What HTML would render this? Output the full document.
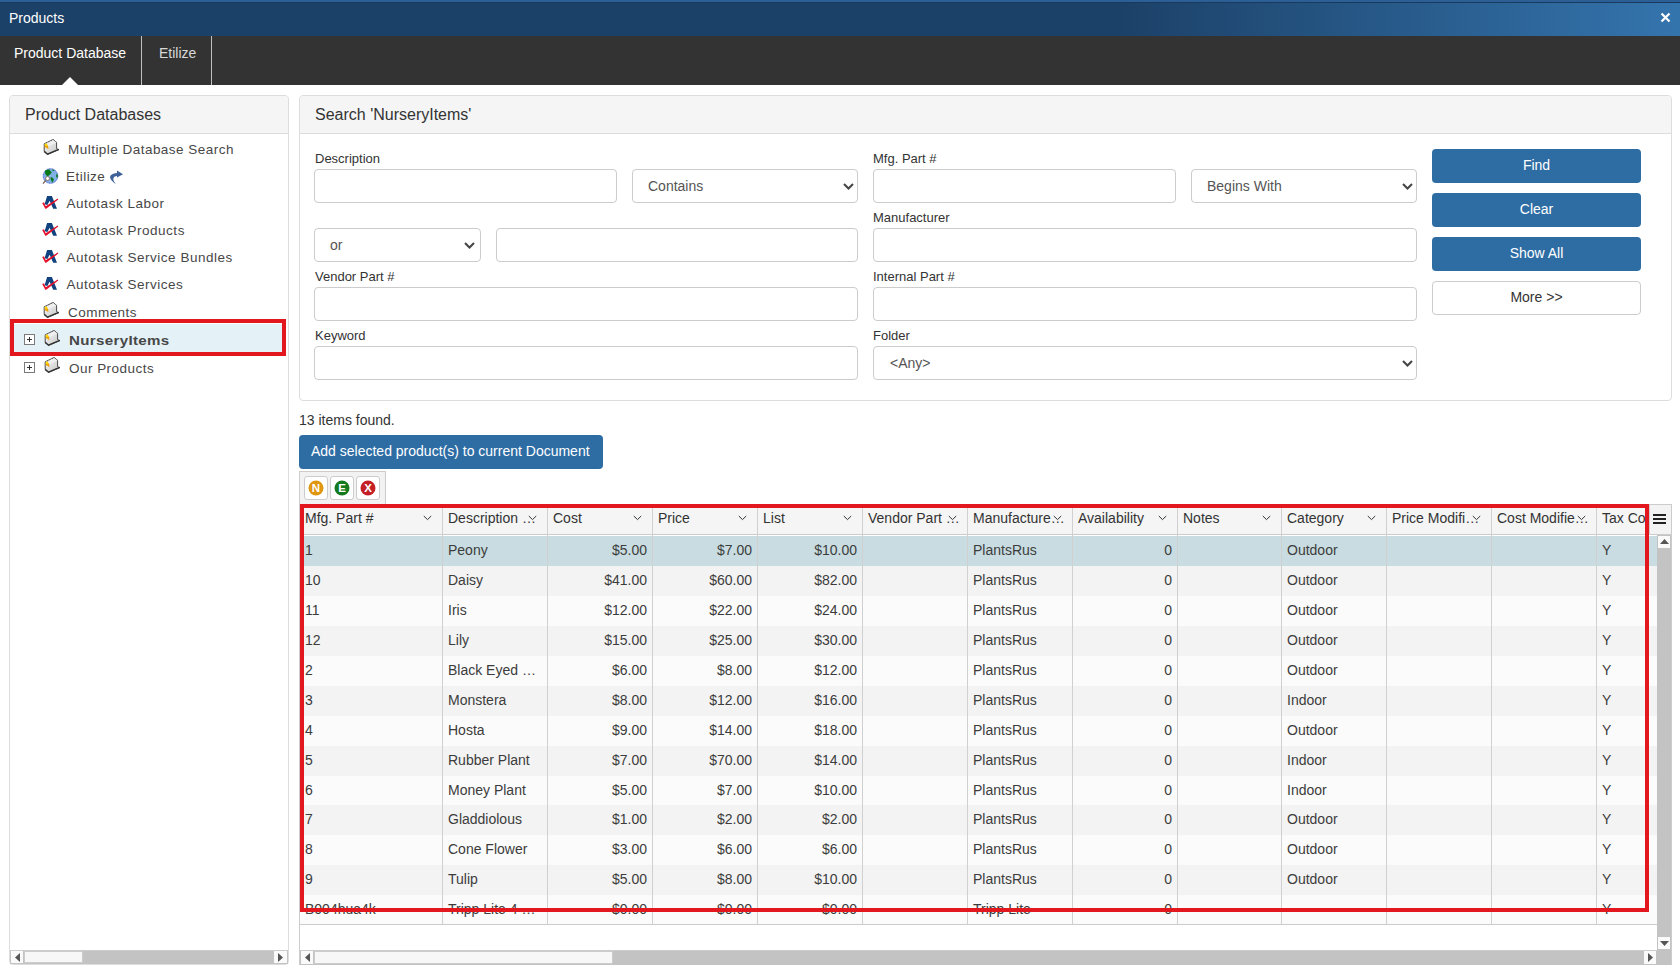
<!DOCTYPE html>
<html><head><meta charset="utf-8">
<style>
*{box-sizing:border-box;margin:0;padding:0}
html,body{width:1680px;height:965px;overflow:hidden;background:#fff;font-family:"Liberation Sans",sans-serif;color:#333;font-size:14px}
.abs{position:absolute}
#title{left:0;top:0;width:1680px;height:36px;background:linear-gradient(to right,#1c4168 0,#1c4168 1120px,#3474ad 1680px);}
#title .strip{left:0;top:0;width:1680px;height:2px;background:#2b5f95}
#title .line{left:0;top:2px;width:1680px;height:1px;background:#173a5e}
#title .t{left:9px;top:10px;color:#fff;font-size:14px;line-height:16px}
#tabs{left:0;top:36px;width:1680px;height:49px;background:#333}
.tab{top:0;height:49px;color:#fff;font-size:14px;line-height:16px;padding-top:9px}
.sep{top:0;width:1px;height:49px;background:#c0c0c0}
.panel{border:1px solid #ddd;border-radius:4px;background:#fff}
.phead{left:0;top:0;right:0;height:38px;background:#f5f5f5;border-bottom:1px solid #ddd;border-radius:3px 3px 0 0}
.ptitle{font-size:16px;line-height:18px;color:#333}
.lbl{font-size:13px;line-height:15px;color:#333}
.inp{border:1px solid #ccc;border-radius:4px;background:#fff;height:34px}
.sel{border:1px solid #ccc;border-radius:4px;background:#fff;height:34px;font-size:14px;color:#555;line-height:16px;padding-top:8px}
.tr{font-size:13.5px;line-height:15px;color:#474747;letter-spacing:0.47px;white-space:nowrap}
.gh{font-size:14px;line-height:16px;color:#333;white-space:nowrap}
.gc{font-size:14px;line-height:16px;color:#3c3c3c;white-space:nowrap}
.btn{border-radius:4px;background:#2e6da4;color:#fff;font-size:14px;text-align:center;line-height:16px;padding-top:8px;height:34px}
</style></head><body>
<div id="title" class="abs"><div class="abs strip"></div><div class="abs line"></div><div class="abs t">Products</div>
<svg class="abs" style="left:1660px;top:12px" width="11" height="11" viewBox="0 0 11 11"><path d="M1.5 1.5 L9.5 9.5 M9.5 1.5 L1.5 9.5" stroke="#fff" stroke-width="2.2"/></svg>
</div>
<div id="tabs" class="abs">
 <div class="abs tab" style="left:14px">Product Database</div>
 <div class="abs sep" style="left:141px"></div>
 <div class="abs tab" style="left:159px;color:#d8d8d8">Etilize</div>
 <div class="abs sep" style="left:211px"></div>
 <svg class="abs" style="left:62px;top:41px" width="16" height="8" viewBox="0 0 16 8"><path d="M0 8 L8 0 L16 8 Z" fill="#fff"/></svg>
</div>

<!-- left panel -->
<div class="abs panel" style="left:9px;top:95px;width:280px;height:870px">
 <div class="abs phead"></div>
 <div class="abs ptitle" style="left:15px;top:10px">Product Databases</div>
</div>

<!-- right panel -->
<div class="abs panel" style="left:299px;top:95px;width:1373px;height:306px">
 <div class="abs phead"></div>
 <div class="abs ptitle" style="left:15px;top:10px">Search 'NurseryItems'</div>
</div>


<!-- tree -->
<div class="abs" style="left:14px;top:324px;width:268px;height:28px;background:#e4f1f7"></div>
<svg class="abs" style="left:43px;top:139px" width="17" height="17" viewBox="0 0 17 17"><defs><linearGradient id="g43_139" x1="0" y1="0" x2="1" y2="1"><stop offset="0" stop-color="#fbfbfb"/><stop offset="1" stop-color="#c2c2c2"/></linearGradient></defs><path d="M1.2 4.9 L10.2 0.5 L13.6 3.4 L13.6 9.6 L15.8 10.6 L4.5 15.4 L1.2 12.4 Z" fill="url(#g43_139)" stroke="#4a4a4a" stroke-width="1" stroke-linejoin="round"/><path d="M1.2 4.9 L10.2 0.5 L13.6 3.4 L4.6 7.6 Z" fill="#efefef"/><path d="M1.2 12.4 L4.5 15.2 L15.8 10.4" stroke="#333" stroke-width="1.5" fill="none"/><path d="M1.2 4.9 L10.2 0.5 L13.6 3.4" stroke="#555" stroke-width="1" fill="none" stroke-dasharray="1.3 0.6"/><path d="M1.8 4.9 L3.4 4.5 L5.2 7.2 L5.4 10.2 L4.4 9.6 L3 8.4 L1.8 8.4 Z" fill="#f2a200"/><path d="M1.8 4.9 L3.4 4.5 L4.6 6.6 L3.2 7 L1.8 6.8 Z" fill="#ffe000"/></svg><div class="abs tr" style="left:68px;top:142px">Multiple Database Search</div>
<svg class="abs" style="left:42px;top:168px" width="17" height="17" viewBox="0 0 17 17"><circle cx="8.5" cy="8" r="7.3" fill="#80b2e6" stroke="#3b50d0" stroke-width="0.9" stroke-dasharray="1.2 0.5"/><path d="M3 2.6 L7 1.2 L9.8 4.5 L8 6.5 L5.6 8.6 L3.2 6 Z" fill="#087818"/><path d="M10 1.4 L12.6 2 L11 3.6 Z" fill="#087818"/><path d="M14.2 6 L15.8 6.8 L15.6 9.8 L14.2 9.2 Z" fill="#087818"/><path d="M8.4 9.4 L10 9.2 L12 11.6 L10.2 14.8 L9 12 Z" fill="#087818"/><line x1="3.8" y1="12.4" x2="1" y2="15.6" stroke="#7a6050" stroke-width="1.3"/><circle cx="5.6" cy="10.5" r="2" fill="#fff" stroke="#80604c" stroke-width="0.8"/></svg><div class="abs tr" style="left:66px;top:169px">Etilize</div><svg class="abs" style="left:109px;top:170px" width="15" height="15" viewBox="0 0 15 15"><path d="M7.4 14.6 C3 11.5 -0.2 8.5 1.6 5.6 C3 3.6 5.5 3 8 2.9 L8 0.4 L14 4.3 L8 7.6 L8 5.9 C6 5.9 4.4 7 4.3 8.8 C4.2 10.8 5.6 12.8 7.4 14.6 Z" fill="#3f6298"/></svg>
<svg class="abs" style="left:40px;top:192px" width="22" height="20" viewBox="0 0 22 20"><path d="M7.1 4 L11.9 4 L17 16.8 L13.2 16.8 L9.6 8.8 L7.4 13 L4.6 12.2 Z" fill="#0f427f"/><path d="M2.2 10.9 L4 10.3 L5.7 14.2 L17.7 6.6 L18.3 7.6 L6.2 16.7 L5.3 16.7 Z" fill="#e3102c"/></svg><div class="abs tr" style="left:66.5px;top:196px;letter-spacing:0.52px">Autotask Labor</div>
<svg class="abs" style="left:40px;top:219px" width="22" height="20" viewBox="0 0 22 20"><path d="M7.1 4 L11.9 4 L17 16.8 L13.2 16.8 L9.6 8.8 L7.4 13 L4.6 12.2 Z" fill="#0f427f"/><path d="M2.2 10.9 L4 10.3 L5.7 14.2 L17.7 6.6 L18.3 7.6 L6.2 16.7 L5.3 16.7 Z" fill="#e3102c"/></svg><div class="abs tr" style="left:66.5px;top:223px;letter-spacing:0.52px">Autotask Products</div>
<svg class="abs" style="left:40px;top:246px" width="22" height="20" viewBox="0 0 22 20"><path d="M7.1 4 L11.9 4 L17 16.8 L13.2 16.8 L9.6 8.8 L7.4 13 L4.6 12.2 Z" fill="#0f427f"/><path d="M2.2 10.9 L4 10.3 L5.7 14.2 L17.7 6.6 L18.3 7.6 L6.2 16.7 L5.3 16.7 Z" fill="#e3102c"/></svg><div class="abs tr" style="left:66.5px;top:250px;letter-spacing:0.52px">Autotask Service Bundles</div>
<svg class="abs" style="left:40px;top:273px" width="22" height="20" viewBox="0 0 22 20"><path d="M7.1 4 L11.9 4 L17 16.8 L13.2 16.8 L9.6 8.8 L7.4 13 L4.6 12.2 Z" fill="#0f427f"/><path d="M2.2 10.9 L4 10.3 L5.7 14.2 L17.7 6.6 L18.3 7.6 L6.2 16.7 L5.3 16.7 Z" fill="#e3102c"/></svg><div class="abs tr" style="left:66.5px;top:277px;letter-spacing:0.52px">Autotask Services</div>
<svg class="abs" style="left:43px;top:302px" width="17" height="17" viewBox="0 0 17 17"><defs><linearGradient id="g43_302" x1="0" y1="0" x2="1" y2="1"><stop offset="0" stop-color="#fbfbfb"/><stop offset="1" stop-color="#c2c2c2"/></linearGradient></defs><path d="M1.2 4.9 L10.2 0.5 L13.6 3.4 L13.6 9.6 L15.8 10.6 L4.5 15.4 L1.2 12.4 Z" fill="url(#g43_302)" stroke="#4a4a4a" stroke-width="1" stroke-linejoin="round"/><path d="M1.2 4.9 L10.2 0.5 L13.6 3.4 L4.6 7.6 Z" fill="#efefef"/><path d="M1.2 12.4 L4.5 15.2 L15.8 10.4" stroke="#333" stroke-width="1.5" fill="none"/><path d="M1.2 4.9 L10.2 0.5 L13.6 3.4" stroke="#555" stroke-width="1" fill="none" stroke-dasharray="1.3 0.6"/><path d="M1.8 4.9 L3.4 4.5 L5.2 7.2 L5.4 10.2 L4.4 9.6 L3 8.4 L1.8 8.4 Z" fill="#f2a200"/><path d="M1.8 4.9 L3.4 4.5 L4.6 6.6 L3.2 7 L1.8 6.8 Z" fill="#ffe000"/></svg><div class="abs tr" style="left:68px;top:305px">Comments</div>
<div class="abs" style="left:24px;top:334px;width:11px;height:11px;border:1px solid #7a7a7a;background:#fff"></div><div class="abs" style="left:27px;top:339px;width:5px;height:1px;background:#333"></div><div class="abs" style="left:29px;top:337px;width:1px;height:5px;background:#333"></div><svg class="abs" style="left:44px;top:330px" width="17" height="17" viewBox="0 0 17 17"><defs><linearGradient id="g44_330" x1="0" y1="0" x2="1" y2="1"><stop offset="0" stop-color="#fbfbfb"/><stop offset="1" stop-color="#c2c2c2"/></linearGradient></defs><path d="M1.2 4.9 L10.2 0.5 L13.6 3.4 L13.6 9.6 L15.8 10.6 L4.5 15.4 L1.2 12.4 Z" fill="url(#g44_330)" stroke="#4a4a4a" stroke-width="1" stroke-linejoin="round"/><path d="M1.2 4.9 L10.2 0.5 L13.6 3.4 L4.6 7.6 Z" fill="#efefef"/><path d="M1.2 12.4 L4.5 15.2 L15.8 10.4" stroke="#333" stroke-width="1.5" fill="none"/><path d="M1.2 4.9 L10.2 0.5 L13.6 3.4" stroke="#555" stroke-width="1" fill="none" stroke-dasharray="1.3 0.6"/><path d="M1.8 4.9 L3.4 4.5 L5.2 7.2 L5.4 10.2 L4.4 9.6 L3 8.4 L1.8 8.4 Z" fill="#f2a200"/><path d="M1.8 4.9 L3.4 4.5 L4.6 6.6 L3.2 7 L1.8 6.8 Z" fill="#ffe000"/></svg><div class="abs tr" style="left:69px;top:333px;font-weight:bold;font-size:13px;letter-spacing:0.3px;transform:scaleX(1.16);transform-origin:0 0">NurseryItems</div>
<div class="abs" style="left:24px;top:362px;width:11px;height:11px;border:1px solid #7a7a7a;background:#fff"></div><div class="abs" style="left:27px;top:367px;width:5px;height:1px;background:#333"></div><div class="abs" style="left:29px;top:365px;width:1px;height:5px;background:#333"></div><svg class="abs" style="left:44px;top:357px" width="17" height="17" viewBox="0 0 17 17"><defs><linearGradient id="g44_357" x1="0" y1="0" x2="1" y2="1"><stop offset="0" stop-color="#fbfbfb"/><stop offset="1" stop-color="#c2c2c2"/></linearGradient></defs><path d="M1.2 4.9 L10.2 0.5 L13.6 3.4 L13.6 9.6 L15.8 10.6 L4.5 15.4 L1.2 12.4 Z" fill="url(#g44_357)" stroke="#4a4a4a" stroke-width="1" stroke-linejoin="round"/><path d="M1.2 4.9 L10.2 0.5 L13.6 3.4 L4.6 7.6 Z" fill="#efefef"/><path d="M1.2 12.4 L4.5 15.2 L15.8 10.4" stroke="#333" stroke-width="1.5" fill="none"/><path d="M1.2 4.9 L10.2 0.5 L13.6 3.4" stroke="#555" stroke-width="1" fill="none" stroke-dasharray="1.3 0.6"/><path d="M1.8 4.9 L3.4 4.5 L5.2 7.2 L5.4 10.2 L4.4 9.6 L3 8.4 L1.8 8.4 Z" fill="#f2a200"/><path d="M1.8 4.9 L3.4 4.5 L4.6 6.6 L3.2 7 L1.8 6.8 Z" fill="#ffe000"/></svg><div class="abs tr" style="left:69px;top:361px">Our Products</div>
<div class="abs" style="left:10px;top:319px;width:276px;height:37px;border:4px solid #e3171e"></div>

<!-- form -->
<div class="abs lbl" style="left:315px;top:151px">Description</div>
<div class="abs inp" style="left:314px;top:169px;width:303px"></div>
<div class="abs sel" style="left:632px;top:169px;width:226px;padding-left:15px">Contains</div>
<svg class="abs" style="left:843px;top:183px" width="11" height="7" viewBox="0 0 11 7"><path d="M1 1 L5.5 5.5 L10 1" fill="none" stroke="#444" stroke-width="2"/></svg>
<div class="abs lbl" style="left:873px;top:151px">Mfg. Part #</div>
<div class="abs inp" style="left:873px;top:169px;width:303px"></div>
<div class="abs sel" style="left:1191px;top:169px;width:226px;padding-left:15px">Begins With</div>
<svg class="abs" style="left:1402px;top:183px" width="11" height="7" viewBox="0 0 11 7"><path d="M1 1 L5.5 5.5 L10 1" fill="none" stroke="#444" stroke-width="2"/></svg>
<div class="abs btn" style="left:1432px;top:149px;width:209px">Find</div>
<div class="abs btn" style="left:1432px;top:193px;width:209px">Clear</div>
<div class="abs btn" style="left:1432px;top:237px;width:209px">Show All</div>
<div class="abs btn" style="left:1432px;top:281px;width:209px;background:#fff;color:#333;border:1px solid #ccc;padding-top:7px">More &gt;&gt;</div>

<div class="abs sel" style="left:314px;top:228px;width:167px;padding-left:15px">or</div>
<svg class="abs" style="left:464px;top:242px" width="11" height="7" viewBox="0 0 11 7"><path d="M1 1 L5.5 5.5 L10 1" fill="none" stroke="#444" stroke-width="2"/></svg>
<div class="abs inp" style="left:496px;top:228px;width:362px"></div>
<div class="abs lbl" style="left:873px;top:210px">Manufacturer</div>
<div class="abs inp" style="left:873px;top:228px;width:544px"></div>

<div class="abs lbl" style="left:315px;top:269px">Vendor Part #</div>
<div class="abs inp" style="left:314px;top:287px;width:544px"></div>
<div class="abs lbl" style="left:873px;top:269px">Internal Part #</div>
<div class="abs inp" style="left:873px;top:287px;width:544px"></div>

<div class="abs lbl" style="left:315px;top:328px">Keyword</div>
<div class="abs inp" style="left:314px;top:346px;width:544px"></div>
<div class="abs lbl" style="left:873px;top:328px">Folder</div>
<div class="abs sel" style="left:873px;top:346px;width:544px;padding-left:16px">&lt;Any&gt;</div>
<svg class="abs" style="left:1402px;top:360px" width="11" height="7" viewBox="0 0 11 7"><path d="M1 1 L5.5 5.5 L10 1" fill="none" stroke="#444" stroke-width="2"/></svg>

<div class="abs" style="left:299px;top:412px;font-size:14px;line-height:16px">13 items found.</div>
<div class="abs btn" style="left:299px;top:435px;width:304px;height:34px;text-align:left;padding-left:12px">Add selected product(s) to current Document</div>
<!-- toolbar -->
<div class="abs" style="left:299px;top:471px;width:87px;height:34px;background:#f2f2f2;border:1px solid #ccc;border-bottom:none"></div>
<div class="abs" style="left:304px;top:476px;width:24px;height:24px;background:#fff;border:1px solid #ccc;border-radius:3px"></div><svg class="abs" style="left:308px;top:480px" width="16" height="16" viewBox="0 0 16 16"><circle cx="8" cy="8" r="7.5" fill="#e0960f"/><text x="8" y="12.2" text-anchor="middle" font-family="Liberation Sans" font-weight="bold" font-size="11.5" fill="#fff">N</text></svg>
<div class="abs" style="left:330px;top:476px;width:24px;height:24px;background:#fff;border:1px solid #ccc;border-radius:3px"></div><svg class="abs" style="left:334px;top:480px" width="16" height="16" viewBox="0 0 16 16"><circle cx="8" cy="8" r="7.5" fill="#157a1e"/><text x="8" y="12.2" text-anchor="middle" font-family="Liberation Sans" font-weight="bold" font-size="11.5" fill="#fff">E</text></svg>
<div class="abs" style="left:356px;top:476px;width:24px;height:24px;background:#fff;border:1px solid #ccc;border-radius:3px"></div><svg class="abs" style="left:360px;top:480px" width="16" height="16" viewBox="0 0 16 16"><circle cx="8" cy="8" r="7.5" fill="#c42026"/><text x="8" y="12.2" text-anchor="middle" font-family="Liberation Sans" font-weight="bold" font-size="11.5" fill="#fff">X</text></svg>
<!-- grid -->
<div id="grid" class="abs" style="left:299px;top:504px;width:1373px;height:461px;border:1px solid #ccc;border-bottom:none;overflow:hidden;background:#fff">
<div class="abs" style="left:0;top:0;width:1372px;height:30px;background:#f5f5f5;border-bottom:1px solid #ccc"></div>
<div class="abs" style="left:142px;top:0;width:1px;height:420px;background:#d4d4d4"></div>
<div class="abs" style="left:247px;top:0;width:1px;height:420px;background:#d4d4d4"></div>
<div class="abs" style="left:352px;top:0;width:1px;height:420px;background:#d4d4d4"></div>
<div class="abs" style="left:457px;top:0;width:1px;height:420px;background:#d4d4d4"></div>
<div class="abs" style="left:562px;top:0;width:1px;height:420px;background:#d4d4d4"></div>
<div class="abs" style="left:667px;top:0;width:1px;height:420px;background:#d4d4d4"></div>
<div class="abs" style="left:772px;top:0;width:1px;height:420px;background:#d4d4d4"></div>
<div class="abs" style="left:877px;top:0;width:1px;height:420px;background:#d4d4d4"></div>
<div class="abs" style="left:981px;top:0;width:1px;height:420px;background:#d4d4d4"></div>
<div class="abs" style="left:1086px;top:0;width:1px;height:420px;background:#d4d4d4"></div>
<div class="abs" style="left:1191px;top:0;width:1px;height:420px;background:#d4d4d4"></div>
<div class="abs" style="left:1296px;top:0;width:1px;height:420px;background:#d4d4d4"></div>
<div class="abs" style="left:0;top:31px;width:1357px;height:30px;background:#c8dce1"></div>
<div class="abs" style="left:0;top:61px;width:1357px;height:30px;background:#f3f3f3"></div>
<div class="abs" style="left:0;top:91px;width:1357px;height:30px;background:#fbfbfb"></div>
<div class="abs" style="left:0;top:121px;width:1357px;height:30px;background:#f3f3f3"></div>
<div class="abs" style="left:0;top:151px;width:1357px;height:30px;background:#fbfbfb"></div>
<div class="abs" style="left:0;top:181px;width:1357px;height:30px;background:#f3f3f3"></div>
<div class="abs" style="left:0;top:211px;width:1357px;height:30px;background:#fbfbfb"></div>
<div class="abs" style="left:0;top:241px;width:1357px;height:30px;background:#f3f3f3"></div>
<div class="abs" style="left:0;top:271px;width:1357px;height:29px;background:#fbfbfb"></div>
<div class="abs" style="left:0;top:300px;width:1357px;height:30px;background:#f3f3f3"></div>
<div class="abs" style="left:0;top:330px;width:1357px;height:30px;background:#fbfbfb"></div>
<div class="abs" style="left:0;top:360px;width:1357px;height:30px;background:#f3f3f3"></div>
<div class="abs" style="left:0;top:390px;width:1357px;height:29px;background:#fbfbfb"></div>
<div class="abs" style="left:142px;top:0;width:1px;height:419px;background:#d0d0d0"></div>
<div class="abs" style="left:247px;top:0;width:1px;height:419px;background:#d0d0d0"></div>
<div class="abs" style="left:352px;top:0;width:1px;height:419px;background:#d0d0d0"></div>
<div class="abs" style="left:457px;top:0;width:1px;height:419px;background:#d0d0d0"></div>
<div class="abs" style="left:562px;top:0;width:1px;height:419px;background:#d0d0d0"></div>
<div class="abs" style="left:667px;top:0;width:1px;height:419px;background:#d0d0d0"></div>
<div class="abs" style="left:772px;top:0;width:1px;height:419px;background:#d0d0d0"></div>
<div class="abs" style="left:877px;top:0;width:1px;height:419px;background:#d0d0d0"></div>
<div class="abs" style="left:981px;top:0;width:1px;height:419px;background:#d0d0d0"></div>
<div class="abs" style="left:1086px;top:0;width:1px;height:419px;background:#d0d0d0"></div>
<div class="abs" style="left:1191px;top:0;width:1px;height:419px;background:#d0d0d0"></div>
<div class="abs" style="left:1296px;top:0;width:1px;height:419px;background:#d0d0d0"></div>
<div class="abs" style="left:0;top:419px;width:1357px;height:1px;background:#ccc"></div>
<div class="abs gh" style="left:5px;top:5px">Mfg. Part #</div>
<svg class="abs" style="left:123px;top:10px" width="9" height="6" viewBox="0 0 9 6"><path d="M0.8 1 L4.5 4.6 L8.2 1" fill="none" stroke="#333" stroke-width="1"/></svg>
<div class="abs gh" style="left:148px;top:5px">Description …</div>
<svg class="abs" style="left:228px;top:10px" width="9" height="6" viewBox="0 0 9 6"><path d="M0.8 1 L4.5 4.6 L8.2 1" fill="none" stroke="#333" stroke-width="1"/></svg>
<div class="abs gh" style="left:253px;top:5px">Cost</div>
<svg class="abs" style="left:333px;top:10px" width="9" height="6" viewBox="0 0 9 6"><path d="M0.8 1 L4.5 4.6 L8.2 1" fill="none" stroke="#333" stroke-width="1"/></svg>
<div class="abs gh" style="left:358px;top:5px">Price</div>
<svg class="abs" style="left:438px;top:10px" width="9" height="6" viewBox="0 0 9 6"><path d="M0.8 1 L4.5 4.6 L8.2 1" fill="none" stroke="#333" stroke-width="1"/></svg>
<div class="abs gh" style="left:463px;top:5px">List</div>
<svg class="abs" style="left:543px;top:10px" width="9" height="6" viewBox="0 0 9 6"><path d="M0.8 1 L4.5 4.6 L8.2 1" fill="none" stroke="#333" stroke-width="1"/></svg>
<div class="abs gh" style="left:568px;top:5px">Vendor Part …</div>
<svg class="abs" style="left:648px;top:10px" width="9" height="6" viewBox="0 0 9 6"><path d="M0.8 1 L4.5 4.6 L8.2 1" fill="none" stroke="#333" stroke-width="1"/></svg>
<div class="abs gh" style="left:673px;top:5px">Manufacture…</div>
<svg class="abs" style="left:753px;top:10px" width="9" height="6" viewBox="0 0 9 6"><path d="M0.8 1 L4.5 4.6 L8.2 1" fill="none" stroke="#333" stroke-width="1"/></svg>
<div class="abs gh" style="left:778px;top:5px">Availability</div>
<svg class="abs" style="left:858px;top:10px" width="9" height="6" viewBox="0 0 9 6"><path d="M0.8 1 L4.5 4.6 L8.2 1" fill="none" stroke="#333" stroke-width="1"/></svg>
<div class="abs gh" style="left:883px;top:5px">Notes</div>
<svg class="abs" style="left:962px;top:10px" width="9" height="6" viewBox="0 0 9 6"><path d="M0.8 1 L4.5 4.6 L8.2 1" fill="none" stroke="#333" stroke-width="1"/></svg>
<div class="abs gh" style="left:987px;top:5px">Category</div>
<svg class="abs" style="left:1067px;top:10px" width="9" height="6" viewBox="0 0 9 6"><path d="M0.8 1 L4.5 4.6 L8.2 1" fill="none" stroke="#333" stroke-width="1"/></svg>
<div class="abs gh" style="left:1092px;top:5px">Price Modifi…</div>
<svg class="abs" style="left:1172px;top:10px" width="9" height="6" viewBox="0 0 9 6"><path d="M0.8 1 L4.5 4.6 L8.2 1" fill="none" stroke="#333" stroke-width="1"/></svg>
<div class="abs gh" style="left:1197px;top:5px">Cost Modifie…</div>
<svg class="abs" style="left:1277px;top:10px" width="9" height="6" viewBox="0 0 9 6"><path d="M0.8 1 L4.5 4.6 L8.2 1" fill="none" stroke="#333" stroke-width="1"/></svg>
<div class="abs gh" style="left:1302px;top:5px">Tax Code</div>
<div class="abs gc" style="left:5px;top:37px">1</div>
<div class="abs gc" style="left:148px;top:37px">Peony</div>
<div class="abs gc" style="left:247px;width:100px;text-align:right;top:37px">$5.00</div>
<div class="abs gc" style="left:352px;width:100px;text-align:right;top:37px">$7.00</div>
<div class="abs gc" style="left:457px;width:100px;text-align:right;top:37px">$10.00</div>
<div class="abs gc" style="left:673px;top:37px">PlantsRus</div>
<div class="abs gc" style="left:772px;width:100px;text-align:right;top:37px">0</div>
<div class="abs gc" style="left:987px;top:37px">Outdoor</div>
<div class="abs gc" style="left:1302px;top:37px">Y</div>
<div class="abs gc" style="left:5px;top:67px">10</div>
<div class="abs gc" style="left:148px;top:67px">Daisy</div>
<div class="abs gc" style="left:247px;width:100px;text-align:right;top:67px">$41.00</div>
<div class="abs gc" style="left:352px;width:100px;text-align:right;top:67px">$60.00</div>
<div class="abs gc" style="left:457px;width:100px;text-align:right;top:67px">$82.00</div>
<div class="abs gc" style="left:673px;top:67px">PlantsRus</div>
<div class="abs gc" style="left:772px;width:100px;text-align:right;top:67px">0</div>
<div class="abs gc" style="left:987px;top:67px">Outdoor</div>
<div class="abs gc" style="left:1302px;top:67px">Y</div>
<div class="abs gc" style="left:5px;top:97px">11</div>
<div class="abs gc" style="left:148px;top:97px">Iris</div>
<div class="abs gc" style="left:247px;width:100px;text-align:right;top:97px">$12.00</div>
<div class="abs gc" style="left:352px;width:100px;text-align:right;top:97px">$22.00</div>
<div class="abs gc" style="left:457px;width:100px;text-align:right;top:97px">$24.00</div>
<div class="abs gc" style="left:673px;top:97px">PlantsRus</div>
<div class="abs gc" style="left:772px;width:100px;text-align:right;top:97px">0</div>
<div class="abs gc" style="left:987px;top:97px">Outdoor</div>
<div class="abs gc" style="left:1302px;top:97px">Y</div>
<div class="abs gc" style="left:5px;top:127px">12</div>
<div class="abs gc" style="left:148px;top:127px">Lily</div>
<div class="abs gc" style="left:247px;width:100px;text-align:right;top:127px">$15.00</div>
<div class="abs gc" style="left:352px;width:100px;text-align:right;top:127px">$25.00</div>
<div class="abs gc" style="left:457px;width:100px;text-align:right;top:127px">$30.00</div>
<div class="abs gc" style="left:673px;top:127px">PlantsRus</div>
<div class="abs gc" style="left:772px;width:100px;text-align:right;top:127px">0</div>
<div class="abs gc" style="left:987px;top:127px">Outdoor</div>
<div class="abs gc" style="left:1302px;top:127px">Y</div>
<div class="abs gc" style="left:5px;top:157px">2</div>
<div class="abs gc" style="left:148px;top:157px">Black Eyed …</div>
<div class="abs gc" style="left:247px;width:100px;text-align:right;top:157px">$6.00</div>
<div class="abs gc" style="left:352px;width:100px;text-align:right;top:157px">$8.00</div>
<div class="abs gc" style="left:457px;width:100px;text-align:right;top:157px">$12.00</div>
<div class="abs gc" style="left:673px;top:157px">PlantsRus</div>
<div class="abs gc" style="left:772px;width:100px;text-align:right;top:157px">0</div>
<div class="abs gc" style="left:987px;top:157px">Outdoor</div>
<div class="abs gc" style="left:1302px;top:157px">Y</div>
<div class="abs gc" style="left:5px;top:187px">3</div>
<div class="abs gc" style="left:148px;top:187px">Monstera</div>
<div class="abs gc" style="left:247px;width:100px;text-align:right;top:187px">$8.00</div>
<div class="abs gc" style="left:352px;width:100px;text-align:right;top:187px">$12.00</div>
<div class="abs gc" style="left:457px;width:100px;text-align:right;top:187px">$16.00</div>
<div class="abs gc" style="left:673px;top:187px">PlantsRus</div>
<div class="abs gc" style="left:772px;width:100px;text-align:right;top:187px">0</div>
<div class="abs gc" style="left:987px;top:187px">Indoor</div>
<div class="abs gc" style="left:1302px;top:187px">Y</div>
<div class="abs gc" style="left:5px;top:217px">4</div>
<div class="abs gc" style="left:148px;top:217px">Hosta</div>
<div class="abs gc" style="left:247px;width:100px;text-align:right;top:217px">$9.00</div>
<div class="abs gc" style="left:352px;width:100px;text-align:right;top:217px">$14.00</div>
<div class="abs gc" style="left:457px;width:100px;text-align:right;top:217px">$18.00</div>
<div class="abs gc" style="left:673px;top:217px">PlantsRus</div>
<div class="abs gc" style="left:772px;width:100px;text-align:right;top:217px">0</div>
<div class="abs gc" style="left:987px;top:217px">Outdoor</div>
<div class="abs gc" style="left:1302px;top:217px">Y</div>
<div class="abs gc" style="left:5px;top:247px">5</div>
<div class="abs gc" style="left:148px;top:247px">Rubber Plant</div>
<div class="abs gc" style="left:247px;width:100px;text-align:right;top:247px">$7.00</div>
<div class="abs gc" style="left:352px;width:100px;text-align:right;top:247px">$70.00</div>
<div class="abs gc" style="left:457px;width:100px;text-align:right;top:247px">$14.00</div>
<div class="abs gc" style="left:673px;top:247px">PlantsRus</div>
<div class="abs gc" style="left:772px;width:100px;text-align:right;top:247px">0</div>
<div class="abs gc" style="left:987px;top:247px">Indoor</div>
<div class="abs gc" style="left:1302px;top:247px">Y</div>
<div class="abs gc" style="left:5px;top:277px">6</div>
<div class="abs gc" style="left:148px;top:277px">Money Plant</div>
<div class="abs gc" style="left:247px;width:100px;text-align:right;top:277px">$5.00</div>
<div class="abs gc" style="left:352px;width:100px;text-align:right;top:277px">$7.00</div>
<div class="abs gc" style="left:457px;width:100px;text-align:right;top:277px">$10.00</div>
<div class="abs gc" style="left:673px;top:277px">PlantsRus</div>
<div class="abs gc" style="left:772px;width:100px;text-align:right;top:277px">0</div>
<div class="abs gc" style="left:987px;top:277px">Indoor</div>
<div class="abs gc" style="left:1302px;top:277px">Y</div>
<div class="abs gc" style="left:5px;top:306px">7</div>
<div class="abs gc" style="left:148px;top:306px">Gladdiolous</div>
<div class="abs gc" style="left:247px;width:100px;text-align:right;top:306px">$1.00</div>
<div class="abs gc" style="left:352px;width:100px;text-align:right;top:306px">$2.00</div>
<div class="abs gc" style="left:457px;width:100px;text-align:right;top:306px">$2.00</div>
<div class="abs gc" style="left:673px;top:306px">PlantsRus</div>
<div class="abs gc" style="left:772px;width:100px;text-align:right;top:306px">0</div>
<div class="abs gc" style="left:987px;top:306px">Outdoor</div>
<div class="abs gc" style="left:1302px;top:306px">Y</div>
<div class="abs gc" style="left:5px;top:336px">8</div>
<div class="abs gc" style="left:148px;top:336px">Cone Flower</div>
<div class="abs gc" style="left:247px;width:100px;text-align:right;top:336px">$3.00</div>
<div class="abs gc" style="left:352px;width:100px;text-align:right;top:336px">$6.00</div>
<div class="abs gc" style="left:457px;width:100px;text-align:right;top:336px">$6.00</div>
<div class="abs gc" style="left:673px;top:336px">PlantsRus</div>
<div class="abs gc" style="left:772px;width:100px;text-align:right;top:336px">0</div>
<div class="abs gc" style="left:987px;top:336px">Outdoor</div>
<div class="abs gc" style="left:1302px;top:336px">Y</div>
<div class="abs gc" style="left:5px;top:366px">9</div>
<div class="abs gc" style="left:148px;top:366px">Tulip</div>
<div class="abs gc" style="left:247px;width:100px;text-align:right;top:366px">$5.00</div>
<div class="abs gc" style="left:352px;width:100px;text-align:right;top:366px">$8.00</div>
<div class="abs gc" style="left:457px;width:100px;text-align:right;top:366px">$10.00</div>
<div class="abs gc" style="left:673px;top:366px">PlantsRus</div>
<div class="abs gc" style="left:772px;width:100px;text-align:right;top:366px">0</div>
<div class="abs gc" style="left:987px;top:366px">Outdoor</div>
<div class="abs gc" style="left:1302px;top:366px">Y</div>
<div class="abs gc" style="left:5px;top:396px">B004hua4k</div>
<div class="abs gc" style="left:148px;top:396px">Tripp Lite 4 …</div>
<div class="abs gc" style="left:247px;width:100px;text-align:right;top:396px">$0.00</div>
<div class="abs gc" style="left:352px;width:100px;text-align:right;top:396px">$0.00</div>
<div class="abs gc" style="left:457px;width:100px;text-align:right;top:396px">$0.00</div>
<div class="abs gc" style="left:673px;top:396px">Tripp Lite</div>
<div class="abs gc" style="left:772px;width:100px;text-align:right;top:396px">0</div>
<div class="abs gc" style="left:1302px;top:396px">Y</div>
<div class="abs" style="left:1349px;top:-1px;width:23px;height:31px;background:#f3f3f3;border:1px solid #ccc;border-right:none"></div>
<div class="abs" style="left:1353px;top:9px;width:13px;height:2px;background:#222"></div><div class="abs" style="left:1353px;top:13px;width:13px;height:2px;background:#222"></div><div class="abs" style="left:1353px;top:17px;width:13px;height:2px;background:#222"></div>
<div class="abs" style="left:1357px;top:30px;width:14px;height:430px;background:#c3c3c3"></div>
<div class="abs" style="left:1358px;top:31px;width:12px;height:12px;background:#fafafa"></div><svg class="abs" style="left:1360px;top:34px" width="9" height="5" viewBox="0 0 9 5"><path d="M0 5 L4.5 0 L9 5Z" fill="#555"/></svg>
<div class="abs" style="left:1358px;top:432px;width:12px;height:12px;background:#fafafa"></div><svg class="abs" style="left:1360px;top:436px" width="9" height="5" viewBox="0 0 9 5"><path d="M0 0 L4.5 5 L9 0Z" fill="#555"/></svg>
<div class="abs" style="left:0;top:445px;width:1357px;height:15px;background:#c3c3c3;border-top:1px solid #ccc"></div>
<div class="abs" style="left:1px;top:446px;width:12px;height:13px;background:#fafafa"></div><svg class="abs" style="left:5px;top:448px" width="5" height="9" viewBox="0 0 5 9"><path d="M5 0 L0 4.5 L5 9Z" fill="#555"/></svg>
<div class="abs" style="left:14px;top:446px;width:299px;height:13px;background:#f7f7f7;border:1px solid #ccc"></div>
<div class="abs" style="left:1344px;top:446px;width:12px;height:13px;background:#fafafa"></div><svg class="abs" style="left:1348px;top:448px" width="5" height="9" viewBox="0 0 5 9"><path d="M0 0 L5 4.5 L0 9Z" fill="#555"/></svg>
</div>
<div class="abs" style="left:300px;top:504px;width:1349px;height:408px;border:4px solid #e3171e"></div>
<div class="abs" style="left:10px;top:950px;width:278px;height:14px;background:#c3c3c3;border-top:1px solid #ccc"></div>
<div class="abs" style="left:11px;top:951px;width:12px;height:12px;background:#fafafa"></div><svg class="abs" style="left:15px;top:953px" width="5" height="9" viewBox="0 0 5 9"><path d="M5 0 L0 4.5 L5 9Z" fill="#555"/></svg>
<div class="abs" style="left:24px;top:951px;width:59px;height:12px;background:#f7f7f7;border:1px solid #ccc"></div>
<div class="abs" style="left:274px;top:951px;width:13px;height:12px;background:#fafafa"></div><svg class="abs" style="left:278px;top:953px" width="5" height="9" viewBox="0 0 5 9"><path d="M0 0 L5 4.5 L0 9Z" fill="#555"/></svg>
</body></html>
